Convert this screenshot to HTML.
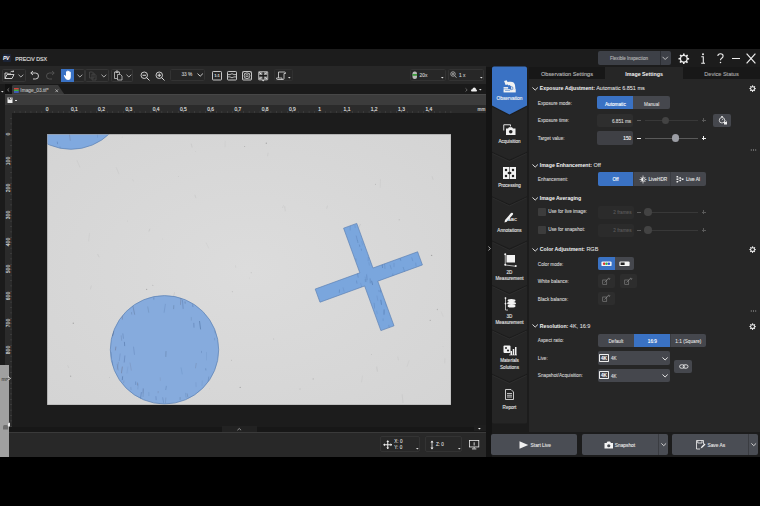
<!DOCTYPE html>
<html><head><meta charset="utf-8">
<style>
*{margin:0;padding:0;box-sizing:border-box}
html,body{width:760px;height:506px;overflow:hidden;background:#000;font-family:"Liberation Sans",sans-serif;color:#ddd}
.a{position:absolute}
.t{position:absolute;white-space:nowrap;font-size:5px;line-height:8px;height:8px;color:#d0d0d0;-webkit-text-stroke:0.12px currentColor}
.b,b{font-weight:bold;-webkit-text-stroke:0}
.c{text-align:center}
.r{text-align:right}
svg{position:absolute;overflow:visible}
.btn{position:absolute;background:#45474d}
.blue{background:#3a72c4}
</style></head><body>

<!-- ===== TITLE BAR ===== -->
<div class="a" style="left:0;top:49px;width:760px;height:17.5px;background:#1c1c1c"></div>
<div class="a" style="left:2.5px;top:53.5px;width:8.5px;height:8px;background:#1c2538;border-radius:1px"></div>
<div class="t b" style="left:3.1px;top:53.6px;font-size:5px;line-height:8px;color:#fff;letter-spacing:-0.4px;font-style:italic">PV</div>
<div class="t" style="left:15.3px;top:54.6px;font-size:5.3px;color:#e2e2e2">PRECiV DSX</div>

<div class="a" style="left:598.3px;top:50.6px;width:72.7px;height:14px;background:#3d4047;border-radius:2px"></div>
<div class="a" style="left:660px;top:50.6px;width:0.8px;height:14px;background:#2c2e33"></div>
<div class="t c" style="left:598px;width:62px;top:55px;font-size:4.6px;color:#b5b5b5">Flexible Inspection</div>
<svg style="left:662px;top:56px" width="8" height="5"><path d="M0.5 0.8 L3.2 3.5 L5.9 0.8" stroke="#ccc" stroke-width="0.9" fill="none"/></svg>
<!-- gear -->
<svg style="left:678.2px;top:52.8px" width="11.6" height="11.6" viewBox="0 0 24 24"><path fill="#eee" d="M10.5 1h3l.5 3.1a8 8 0 0 1 2.3 1l2.6-1.8 2.1 2.1-1.8 2.6a8 8 0 0 1 1 2.3L23 10.5v3l-3.1.5a8 8 0 0 1-1 2.3l1.8 2.6-2.1 2.1-2.6-1.8a8 8 0 0 1-2.3 1L13.5 23h-3l-.5-3.1a8 8 0 0 1-2.3-1l-2.6 1.8-2.1-2.1 1.8-2.6a8 8 0 0 1-1-2.3L1 13.5v-3l3.1-.5a8 8 0 0 1 1-2.3L3.3 5.1l2.1-2.1 2.6 1.8a8 8 0 0 1 2.3-1z"/><circle cx="12" cy="12" r="5.6" fill="#1c1c1c"/></svg>
<svg style="left:699.5px;top:53px" width="6" height="11"><circle cx="3" cy="1.2" r="1" fill="#eee"/><path d="M1.3 3.8 H3.3 V10 M1.2 10.2 H5" stroke="#eee" stroke-width="1.1" fill="none"/></svg>
<svg style="left:716.8px;top:53.3px" width="7" height="11"><path d="M0.9 3 Q0.9 0.7 3.5 0.7 Q6.1 0.7 6.1 3 Q6.1 4.6 4.4 5.4 Q3.5 5.9 3.5 7.3" stroke="#eee" stroke-width="1.1" fill="none"/><circle cx="3.5" cy="9.6" r="0.75" fill="#eee"/></svg>
<div class="a" style="left:731.8px;top:57.8px;width:8.2px;height:1.3px;background:#eee"></div>
<svg style="left:746px;top:53px" width="10" height="11"><path d="M0.6 0.6 L9.4 10.4 M9.4 0.6 L0.6 10.4" stroke="#eee" stroke-width="1.2"/></svg>

<!-- ===== LEFT WORK AREA ===== -->
<!-- toolbar -->
<div class="a" style="left:0;top:66.2px;width:486px;height:18.1px;background:#272727"></div>
<!-- tab strip -->
<div class="a" style="left:0;top:84.3px;width:486px;height:10.1px;background:#1a1a1a"></div>
<div class="a" style="left:4.7px;top:84.3px;width:7px;height:10.1px;background:#111"></div>
<!-- document tab -->
<svg style="left:11.8px;top:85.3px" width="53" height="10"><path d="M0 9.2 L0 1.5 Q0 0 1.5 0 L46 0 L52.3 9.2 Z" fill="#3a3a3a"/></svg>
<!-- sub toolbar -->
<div class="a" style="left:4.7px;top:94.4px;width:481.3px;height:11px;background:#3c3c3c;border-top:0.8px solid #474747"></div>
<!-- h ruler -->
<div class="a" style="left:4.7px;top:105.4px;width:481.3px;height:8px;background:#2b2b2b"></div>
<!-- left strip -->
<div class="a" style="left:0;top:84.3px;width:4.7px;height:343px;background:#1b1b1b"></div>
<!-- v ruler -->
<div class="a" style="left:4.7px;top:113.4px;width:7.7px;height:313.6px;background:#2b2b2b"></div>
<!-- canvas -->
<div class="a" style="left:12.4px;top:113.4px;width:473.6px;height:313.6px;background:#1c1c1c"></div>

<!-- toolbar groups -->
<div class="a" style="left:2.4px;top:68.7px;width:23.2px;height:13.1px;border:0.7px solid #363636;border-radius:1.5px"></div>
<svg style="left:3.5px;top:70px" width="11" height="10" viewBox="0 0 22 20"><path d="M2 6 V17 H16 L20 9 H6 L2 17 M2 6 H7 L9 8 H14 V9" stroke="#ddd" stroke-width="1.8" fill="none" stroke-linejoin="round"/><path d="M13 4 Q16 1 19 3 M19 1 V3.5 H16.5" stroke="#ddd" stroke-width="1.6" fill="none"/></svg>
<svg style="left:18px;top:73.5px" width="6" height="4"><path d="M0.5 0.7 L2.9 3 L5.3 0.7" stroke="#ccc" stroke-width="0.8" fill="none"/></svg>
<!-- undo redo -->
<svg style="left:29.3px;top:70px" width="11" height="10" viewBox="0 0 22 20"><path d="M4 6 H13 Q19 6 19 12 Q19 18 13 18 H8" stroke="#ddd" stroke-width="1.8" fill="none"/><path d="M8 2 L3.5 6 L8 10" stroke="#ddd" stroke-width="1.8" fill="none"/></svg>
<svg style="left:44.5px;top:70px" width="11" height="10" viewBox="0 0 22 20"><path d="M18 6 H9 Q3 6 3 12 Q3 18 9 18 H14" stroke="#555" stroke-width="1.8" fill="none"/><path d="M14 2 L18.5 6 L14 10" stroke="#555" stroke-width="1.8" fill="none"/></svg>
<!-- hand -->
<div class="a" style="left:60.5px;top:68.7px;width:24px;height:13.1px;border:0.7px solid #363636;border-radius:1.5px"></div>
<div class="a blue" style="left:61px;top:68.7px;width:13.4px;height:13.1px"></div>
<svg style="left:63px;top:69.8px" width="10" height="11" viewBox="0 0 20 22"><path d="M6 12 V4 Q6 2.5 7.2 2.5 Q8.4 2.5 8.4 4 V10 V2.5 Q8.4 1 9.6 1 Q10.8 1 10.8 2.5 V10 V3 Q10.8 1.5 12 1.5 Q13.2 1.5 13.2 3 V10 V5 Q13.2 3.5 14.4 3.5 Q15.6 3.5 15.6 5 V13 Q15.6 20 10 20 Q6.5 20 4.5 16.5 L2 12 Q1.2 10.5 2.4 10 Q3.6 9.5 4.6 11 Z" fill="#fff"/></svg>
<svg style="left:77px;top:73.5px" width="6" height="4"><path d="M0.5 0.7 L2.9 3 L5.3 0.7" stroke="#ccc" stroke-width="0.8" fill="none"/></svg>
<!-- copy -->
<div class="a" style="left:85.2px;top:68.7px;width:23.7px;height:13.1px;border:0.7px solid #363636;border-radius:1.5px"></div>
<svg style="left:87.5px;top:70.5px" width="10" height="10" viewBox="0 0 20 20"><path d="M3 2 H9 L12 5 V14 H3 Z M8 6 H13 L16 9 V18 H8 Z" stroke="#4a4a4a" stroke-width="1.6" fill="none"/></svg>
<svg style="left:101px;top:73.5px" width="6" height="4"><path d="M0.5 0.7 L2.9 3 L5.3 0.7" stroke="#ccc" stroke-width="0.8" fill="none"/></svg>
<!-- paste -->
<div class="a" style="left:111.3px;top:68.7px;width:21.9px;height:13.1px;border:0.7px solid #363636;border-radius:1.5px"></div>
<svg style="left:112.5px;top:70.3px" width="10" height="10.5" viewBox="0 0 20 21"><path d="M3 4 H13 V8 M3 4 V17 H8 M6 2 H10 V5 H6 Z" stroke="#c8c8c8" stroke-width="1.6" fill="none"/><path d="M9 9 H15 L18 12 V20 H9 Z" stroke="#c8c8c8" stroke-width="1.6" fill="none"/></svg>
<svg style="left:126px;top:73.5px" width="6" height="4"><path d="M0.5 0.7 L2.9 3 L5.3 0.7" stroke="#ccc" stroke-width="0.8" fill="none"/></svg>
<!-- zoom out/in -->
<svg style="left:139.7px;top:70.9px" width="10.5" height="10" viewBox="0 0 21 20"><circle cx="8.5" cy="8.5" r="6.5" stroke="#ddd" stroke-width="1.8" fill="none"/><path d="M5 8.5 H12 M13 13 L19 19" stroke="#ddd" stroke-width="2" fill="none"/></svg>
<svg style="left:155px;top:70.9px" width="10.5" height="10" viewBox="0 0 21 20"><circle cx="8.5" cy="8.5" r="6.5" stroke="#ddd" stroke-width="1.8" fill="none"/><path d="M5 8.5 H12 M8.5 5 V12 M13 13 L19 19" stroke="#ddd" stroke-width="2" fill="none"/></svg>
<!-- 33% -->
<div class="a" style="left:170.1px;top:69.3px;width:35px;height:11.3px;border:0.7px solid #333;border-radius:1.5px;background:#252525"></div>
<div class="t" style="left:181.4px;top:71px;font-size:4.8px;color:#c8c8c8">33 %</div>
<svg style="left:197px;top:73.3px" width="7" height="4"><path d="M0.5 0.6 L3.2 3.2 L5.9 0.6" stroke="#ddd" stroke-width="0.9" fill="none"/></svg>
<!-- view icons -->
<svg style="left:212px;top:70.5px" width="10" height="9.5"><rect x="0.5" y="0.5" width="9" height="8.5" rx="0.8" stroke="#d8d8d8" stroke-width="0.9" fill="none"/></svg>
<div class="t c b" style="left:212px;width:10px;top:72.2px;font-size:4.2px;color:#e0e0e0;letter-spacing:-0.2px">1:1</div>
<svg style="left:227px;top:70.5px" width="10" height="9.5"><rect x="0.5" y="0.5" width="9" height="8.5" rx="0.8" stroke="#d8d8d8" stroke-width="0.9" fill="none"/><path d="M1 3.6 H3 Q5 1.8 7 3.6 H9 M1 5.9 H3 Q5 7.7 7 5.9 H9" stroke="#d8d8d8" stroke-width="0.8" fill="none"/></svg>
<svg style="left:242.4px;top:70.5px" width="10" height="9.5"><rect x="0.5" y="0.5" width="9" height="8.5" rx="0.8" stroke="#d8d8d8" stroke-width="0.9" fill="none"/><circle cx="5" cy="4.75" r="2.9" stroke="#d8d8d8" stroke-width="0.8" fill="none"/><rect x="4" y="3.75" width="2" height="2" stroke="#d8d8d8" stroke-width="0.6" fill="none"/><path d="M1 1 L2.9 2.9 M9 1 L7.1 2.9 M1 8.5 L2.9 6.6 M9 8.5 L7.1 6.6" stroke="#bbb" stroke-width="0.6"/></svg>
<svg style="left:257.7px;top:70.5px" width="10.3" height="10.5"><rect x="0.5" y="0.5" width="9.3" height="8.5" rx="0.8" stroke="#aaa" stroke-width="0.8" fill="#8a8a8a"/><path d="M5.15 1.2 V8.3 M1.2 4.75 H9.1" stroke="#1a1a1a" stroke-width="1.3"/><path d="M1.3 1.3 L3.3 3.3 M9 1.3 L7 3.3 M1.3 8.2 L3.3 6.2 M9 8.2 L7 6.2" stroke="#eee" stroke-width="0.9"/><path d="M3.9 9.1 H6.4 L5.15 10.4 Z" fill="#ddd"/></svg>
<div class="a" style="left:274.3px;top:69px;width:18.4px;height:12px;border:0.7px solid #303030;border-radius:1.5px"></div>
<svg style="left:276px;top:70.5px" width="10" height="9.5" viewBox="0 0 20 19"><path d="M5 2 H17 Q19 2 19 4 V5 H16 V15 Q16 17 14 17 H3 Q1 17 1 15 V14 H5 Z M5 14 H12 V17" stroke="#ddd" stroke-width="1.6" fill="none"/></svg>
<svg style="left:288px;top:76.8px" width="3" height="2"><path d="M0 0 H2.6 L1.3 1.5 Z" fill="#ddd"/></svg>
<!-- objective / zoom -->
<div class="a" style="left:410px;top:69.3px;width:35.6px;height:11.9px;border:0.7px solid #333;border-radius:1.5px"></div>
<svg style="left:411.8px;top:71.1px" width="5.5" height="8.5"><rect x="0.5" y="0.5" width="4.5" height="7.5" rx="2" fill="#bbb"/><rect x="0.5" y="3" width="4.5" height="1.8" fill="#3a9a3a"/></svg>
<div class="t" style="left:419.6px;top:71.5px;font-size:4.8px;color:#ccc">20x</div>
<svg style="left:441px;top:77.3px" width="3" height="2"><path d="M0 0 H2.6 L1.3 1.5 Z" fill="#ddd"/></svg>
<div class="a" style="left:448.3px;top:69.3px;width:35.8px;height:11.9px;border:0.7px solid #333;border-radius:1.5px"></div>
<svg style="left:450px;top:71px" width="7" height="7.5" viewBox="0 0 14 15"><circle cx="6" cy="6" r="4.5" stroke="#ccc" stroke-width="1.4" fill="none"/><path d="M4 6 H8 M6 4 V8 M9.5 9.5 L13 13.5" stroke="#ccc" stroke-width="1.4"/></svg>
<div class="t" style="left:459px;top:71.5px;font-size:4.8px;color:#ccc">1 x</div>
<svg style="left:479.5px;top:77.3px" width="3" height="2"><path d="M0 0 H2.6 L1.3 1.5 Z" fill="#ddd"/></svg>
<!-- tab strip items -->
<svg style="left:1px;top:90.8px" width="3" height="2"><path d="M0 0 H2.6 L1.3 1.5 Z" fill="#ddd"/></svg>
<svg style="left:7.3px;top:88px" width="3" height="4"><path d="M2.2 0.3 L0.5 1.9 L2.2 3.5" stroke="#bbb" stroke-width="0.6" fill="none"/></svg>
<svg style="left:14px;top:87.8px" width="5" height="4.8"><rect x="0" y="0" width="4.7" height="1.6" fill="#d94040"/><rect x="0" y="1.6" width="4.7" height="1.6" fill="#40b040"/><rect x="0" y="3.2" width="4.7" height="1.6" fill="#4060d0"/></svg>
<div class="t" style="left:20.3px;top:86.8px;font-size:4.8px;color:#bcbcbc">Image_03.tif*</div>
<svg style="left:54.8px;top:89px" width="3.5" height="3.5"><path d="M0.4 0.4 L3.1 3.1 M3.1 0.4 L0.4 3.1" stroke="#ccc" stroke-width="0.7"/></svg>
<svg style="left:465px;top:88px" width="3" height="4"><path d="M0.5 0.3 L2.2 1.9 L0.5 3.5" stroke="#999" stroke-width="0.6" fill="none"/></svg>
<svg style="left:470.8px;top:87.2px" width="6" height="5"><path d="M1 4.5 H5.2 Q6 4.5 6 3.6 Q6 2.6 5 2.6 Q5 0.6 3.2 0.6 Q1.6 0.6 1.4 2.2 Q0 2.3 0 3.5 Q0 4.5 1 4.5Z" fill="#eee"/></svg>
<svg style="left:479.4px;top:89px" width="3" height="2"><path d="M0 0 H2.6 L1.3 1.5 Z" fill="#ddd"/></svg>
<!-- sub toolbar save icon -->
<svg style="left:7px;top:96.5px" width="6" height="6.5" viewBox="0 0 12 13"><path d="M1 1 H11 V12 H1 Z" fill="#eee"/><rect x="3" y="1" width="6" height="4" fill="#3a3a3a"/><rect x="6" y="1.5" width="1.8" height="2.5" fill="#eee"/></svg>
<div class="a" style="left:15px;top:100px;width:1.6px;height:0.6px;background:#ddd"></div>

<!-- rulers -->
<div class="t c" style="left:37.0px;width:20px;top:105.8px;font-size:4.9px;color:#e0e0e0">0</div>
<div class="t c" style="left:64.3px;width:20px;top:105.8px;font-size:4.9px;color:#e0e0e0">0,1</div>
<div class="t c" style="left:91.5px;width:20px;top:105.8px;font-size:4.9px;color:#e0e0e0">0,2</div>
<div class="t c" style="left:118.8px;width:20px;top:105.8px;font-size:4.9px;color:#e0e0e0">0,3</div>
<div class="t c" style="left:146.1px;width:20px;top:105.8px;font-size:4.9px;color:#e0e0e0">0,4</div>
<div class="t c" style="left:173.3px;width:20px;top:105.8px;font-size:4.9px;color:#e0e0e0">0,5</div>
<div class="t c" style="left:200.6px;width:20px;top:105.8px;font-size:4.9px;color:#e0e0e0">0,6</div>
<div class="t c" style="left:227.9px;width:20px;top:105.8px;font-size:4.9px;color:#e0e0e0">0,7</div>
<div class="t c" style="left:255.2px;width:20px;top:105.8px;font-size:4.9px;color:#e0e0e0">0,8</div>
<div class="t c" style="left:282.4px;width:20px;top:105.8px;font-size:4.9px;color:#e0e0e0">0,9</div>
<div class="t c" style="left:309.7px;width:20px;top:105.8px;font-size:4.9px;color:#e0e0e0">1</div>
<div class="t c" style="left:337.0px;width:20px;top:105.8px;font-size:4.9px;color:#e0e0e0">1,1</div>
<div class="t c" style="left:364.2px;width:20px;top:105.8px;font-size:4.9px;color:#e0e0e0">1,2</div>
<div class="t c" style="left:391.5px;width:20px;top:105.8px;font-size:4.9px;color:#e0e0e0">1,3</div>
<div class="t c" style="left:418.8px;width:20px;top:105.8px;font-size:4.9px;color:#e0e0e0">1,4</div>
<div class="t" style="left:477.5px;top:105.8px;font-size:4.7px;color:#dcdcdc">mm</div>
<svg style="left:0;top:111.9px" width="486" height="2"><path d="M14.28 0h0.6 M19.73 0h0.6 M25.18 0h0.6 M30.64 0h0.6 M36.09 0h0.6 M41.55 0h0.6 M47.00 0h0.6 M52.45 0h0.6 M57.91 0h0.6 M63.36 0h0.6 M68.82 0h0.6 M74.27 0h0.6 M79.72 0h0.6 M85.18 0h0.6 M90.63 0h0.6 M96.09 0h0.6 M101.54 0h0.6 M106.99 0h0.6 M112.45 0h0.6 M117.90 0h0.6 M123.36 0h0.6 M128.81 0h0.6 M134.26 0h0.6 M139.72 0h0.6 M145.17 0h0.6 M150.63 0h0.6 M156.08 0h0.6 M161.53 0h0.6 M166.99 0h0.6 M172.44 0h0.6 M177.90 0h0.6 M183.35 0h0.6 M188.80 0h0.6 M194.26 0h0.6 M199.71 0h0.6 M205.17 0h0.6 M210.62 0h0.6 M216.07 0h0.6 M221.53 0h0.6 M226.98 0h0.6 M232.44 0h0.6 M237.89 0h0.6 M243.34 0h0.6 M248.80 0h0.6 M254.25 0h0.6 M259.71 0h0.6 M265.16 0h0.6 M270.61 0h0.6 M276.07 0h0.6 M281.52 0h0.6 M286.98 0h0.6 M292.43 0h0.6 M297.88 0h0.6 M303.34 0h0.6 M308.79 0h0.6 M314.25 0h0.6 M319.70 0h0.6 M325.15 0h0.6 M330.61 0h0.6 M336.06 0h0.6 M341.52 0h0.6 M346.97 0h0.6 M352.42 0h0.6 M357.88 0h0.6 M363.33 0h0.6 M368.79 0h0.6 M374.24 0h0.6 M379.69 0h0.6 M385.15 0h0.6 M390.60 0h0.6 M396.06 0h0.6 M401.51 0h0.6 M406.96 0h0.6 M412.42 0h0.6 M417.87 0h0.6 M423.33 0h0.6 M428.78 0h0.6 M434.23 0h0.6 M439.69 0h0.6 M445.14 0h0.6 M450.60 0h0.6" stroke="#777" stroke-width="0.7"/></svg>
<div class="t c" style="left:-1.7px;width:20px;top:130.4px;font-size:5px;color:#d8d8d8;transform:rotate(-90deg)">0</div>
<div class="t c" style="left:-1.7px;width:20px;top:157.4px;font-size:5px;color:#d8d8d8;transform:rotate(-90deg)">100</div>
<div class="t c" style="left:-1.7px;width:20px;top:184.4px;font-size:5px;color:#d8d8d8;transform:rotate(-90deg)">200</div>
<div class="t c" style="left:-1.7px;width:20px;top:211.4px;font-size:5px;color:#d8d8d8;transform:rotate(-90deg)">300</div>
<div class="t c" style="left:-1.7px;width:20px;top:238.4px;font-size:5px;color:#d8d8d8;transform:rotate(-90deg)">400</div>
<div class="t c" style="left:-1.7px;width:20px;top:265.4px;font-size:5px;color:#d8d8d8;transform:rotate(-90deg)">500</div>
<div class="t c" style="left:-1.7px;width:20px;top:292.4px;font-size:5px;color:#d8d8d8;transform:rotate(-90deg)">600</div>
<div class="t c" style="left:-1.7px;width:20px;top:319.4px;font-size:5px;color:#d8d8d8;transform:rotate(-90deg)">700</div>
<div class="t c" style="left:-1.7px;width:20px;top:346.4px;font-size:5px;color:#d8d8d8;transform:rotate(-90deg)">800</div>
<svg style="left:11.2px;top:0" width="2" height="430"><path d="M0 118.20v0.6 M0 123.60v0.6 M0 129.00v0.6 M0 134.40v0.6 M0 139.80v0.6 M0 145.20v0.6 M0 150.60v0.6 M0 156.00v0.6 M0 161.40v0.6 M0 166.80v0.6 M0 172.20v0.6 M0 177.60v0.6 M0 183.00v0.6 M0 188.40v0.6 M0 193.80v0.6 M0 199.20v0.6 M0 204.60v0.6 M0 210.00v0.6 M0 215.40v0.6 M0 220.80v0.6 M0 226.20v0.6 M0 231.60v0.6 M0 237.00v0.6 M0 242.40v0.6 M0 247.80v0.6 M0 253.20v0.6 M0 258.60v0.6 M0 264.00v0.6 M0 269.40v0.6 M0 274.80v0.6 M0 280.20v0.6 M0 285.60v0.6 M0 291.00v0.6 M0 296.40v0.6 M0 301.80v0.6 M0 307.20v0.6 M0 312.60v0.6 M0 318.00v0.6 M0 323.40v0.6 M0 328.80v0.6 M0 334.20v0.6 M0 339.60v0.6 M0 345.00v0.6 M0 350.40v0.6 M0 355.80v0.6 M0 361.20v0.6 M0 366.60v0.6 M0 372.00v0.6 M0 377.40v0.6 M0 382.80v0.6 M0 388.20v0.6 M0 393.60v0.6 M0 399.00v0.6 M0 404.40v0.6 M0 409.80v0.6 M0 415.20v0.6 M0 420.60v0.6 M0 426.00v0.6" stroke="#777" stroke-width="0.7"/></svg>
<!-- image -->
<div class="a" style="left:47px;top:134.2px;width:404.3px;height:271.2px;background:#d9d9d9;overflow:hidden">
  <svg style="left:0;top:0" width="404.3" height="271.2">
    <defs>
      <radialGradient id="vg" cx="50%" cy="50%" r="70%"><stop offset="0" stop-color="#dcdcdc"/><stop offset="1" stop-color="#d4d4d4"/></radialGradient>
      <clipPath id="c1"><circle cx="24" cy="-40.1" r="55.4"/></clipPath>
      <clipPath id="c2"><circle cx="117.5" cy="215.8" r="54.2"/></clipPath>
      <clipPath id="c3"><path transform="translate(321.8 143.0) rotate(-20)" d="M-7 -54.5 H7 V-7 H54.5 V7 H7 V54.5 H-7 V7 H-54.5 V-7 H-7 Z"/></clipPath>
    </defs>
    <rect x="0" y="0" width="404.3" height="271.2" fill="url(#vg)"/>
    <circle cx="131.5" cy="42.3" r="0.33" fill="#555" opacity="0.28"/><circle cx="148.3" cy="17.5" r="0.31" fill="#555" opacity="0.26"/><path d="M29.9 26.2 l3.0 7.2" stroke="#777" stroke-width="0.5" opacity="0.15"/><circle cx="253.0" cy="255.0" r="0.46" fill="#555" opacity="0.38"/><path d="M20.6 231.2 l1.2 2.8" stroke="#777" stroke-width="0.5" opacity="0.16"/><circle cx="328.5" cy="50.3" r="0.56" fill="#555" opacity="0.25"/><path d="M221.1 18.8 l-0.6 3.4" stroke="#777" stroke-width="0.5" opacity="0.18"/><path d="M127.7 158.3 l-1.2 3.9" stroke="#777" stroke-width="0.5" opacity="0.23"/><circle cx="99.6" cy="155.4" r="0.65" fill="#555" opacity="0.32"/><path d="M117.2 263.7 l-1.3 4.7" stroke="#777" stroke-width="0.5" opacity="0.14"/><circle cx="197.6" cy="12.5" r="0.61" fill="#555" opacity="0.29"/><circle cx="352.2" cy="85.8" r="0.54" fill="#555" opacity="0.29"/><circle cx="184.5" cy="226.3" r="0.49" fill="#555" opacity="0.31"/><circle cx="26.3" cy="189.3" r="0.70" fill="#555" opacity="0.35"/><circle cx="115.8" cy="105.0" r="0.31" fill="#555" opacity="0.26"/><path d="M69.2 33.3 l2.8 6.8" stroke="#777" stroke-width="0.5" opacity="0.15"/><path d="M158.4 234.7 l-0.3 5.1" stroke="#777" stroke-width="0.5" opacity="0.26"/><path d="M329.7 232.7 l0.7 4.9" stroke="#777" stroke-width="0.5" opacity="0.26"/><path d="M385.1 42.3 l1.0 3.5" stroke="#777" stroke-width="0.5" opacity="0.19"/><path d="M237.6 72.2 l0.7 4.9" stroke="#777" stroke-width="0.5" opacity="0.20"/><circle cx="383.2" cy="186.4" r="0.55" fill="#555" opacity="0.31"/><circle cx="23.6" cy="242.2" r="0.65" fill="#555" opacity="0.34"/><path d="M159.0 108.5 l2.8 5.8" stroke="#777" stroke-width="0.5" opacity="0.12"/><path d="M85.5 45.3 l1.2 2.1" stroke="#777" stroke-width="0.5" opacity="0.14"/><path d="M42.6 99.1 l-1.0 8.1" stroke="#777" stroke-width="0.5" opacity="0.13"/><path d="M102.9 94.8 l-1.0 2.7" stroke="#777" stroke-width="0.5" opacity="0.28"/><path d="M188.4 131.2 l0.4 2.7" stroke="#777" stroke-width="0.5" opacity="0.15"/><path d="M333.5 45.1 l-0.3 8.7" stroke="#777" stroke-width="0.5" opacity="0.13"/><circle cx="219.3" cy="9.2" r="0.69" fill="#555" opacity="0.36"/><path d="M280.5 71.7 l-0.9 3.0" stroke="#777" stroke-width="0.5" opacity="0.20"/><path d="M313.6 90.0 l-3.7 6.7" stroke="#777" stroke-width="0.5" opacity="0.25"/><circle cx="324.4" cy="220.5" r="0.39" fill="#555" opacity="0.28"/><path d="M144.2 9.7 l1.0 3.8" stroke="#777" stroke-width="0.5" opacity="0.23"/><circle cx="384.6" cy="121.4" r="0.70" fill="#555" opacity="0.37"/><path d="M147.9 60.9 l1.0 3.2" stroke="#777" stroke-width="0.5" opacity="0.21"/><path d="M362.1 226.4 l-2.0 6.3" stroke="#777" stroke-width="0.5" opacity="0.13"/><circle cx="266.2" cy="244.9" r="0.60" fill="#555" opacity="0.27"/><path d="M73.4 212.7 l-3.6 6.7" stroke="#777" stroke-width="0.5" opacity="0.18"/><circle cx="162.6" cy="254.8" r="0.37" fill="#555" opacity="0.19"/><circle cx="62.5" cy="243.6" r="0.36" fill="#555" opacity="0.35"/><path d="M394.1 177.5 l2.2 5.4" stroke="#777" stroke-width="0.5" opacity="0.11"/><circle cx="390.4" cy="175.5" r="0.67" fill="#555" opacity="0.26"/><path d="M350.7 222.6 l0.8 3.7" stroke="#777" stroke-width="0.5" opacity="0.15"/><path d="M236.6 71.3 l-1.2 2.7" stroke="#777" stroke-width="0.5" opacity="0.17"/><circle cx="185.3" cy="157.8" r="0.47" fill="#555" opacity="0.37"/><circle cx="202.7" cy="144.0" r="0.31" fill="#555" opacity="0.26"/><circle cx="75.2" cy="3.0" r="0.37" fill="#555" opacity="0.27"/><path d="M292.1 150.6 l-0.3 5.6" stroke="#777" stroke-width="0.5" opacity="0.24"/><path d="M44.4 151.6 l-1.1 3.8" stroke="#777" stroke-width="0.5" opacity="0.19"/><circle cx="226.7" cy="204.9" r="0.48" fill="#555" opacity="0.30"/><circle cx="204.2" cy="138.7" r="0.48" fill="#555" opacity="0.28"/><circle cx="193.2" cy="253.4" r="0.65" fill="#555" opacity="0.37"/><circle cx="105.8" cy="151.4" r="0.64" fill="#555" opacity="0.19"/><path d="M50.6 120.0 l1.6 3.3" stroke="#777" stroke-width="0.5" opacity="0.22"/><path d="M315.6 241.5 l-1.2 6.9" stroke="#777" stroke-width="0.5" opacity="0.13"/><path d="M355.1 260.3 l0.9 8.6" stroke="#777" stroke-width="0.5" opacity="0.19"/><path d="M397.9 224.3 l-0.1 5.0" stroke="#777" stroke-width="0.5" opacity="0.17"/><circle cx="80.3" cy="87.0" r="0.31" fill="#555" opacity="0.29"/><path d="M178.2 6.8 l-0.1 6.4" stroke="#777" stroke-width="0.5" opacity="0.12"/><circle cx="396.0" cy="212.5" r="0.34" fill="#555" opacity="0.23"/>
    <circle cx="24" cy="-40.1" r="55.4" fill="#80a9df" stroke="#5a7fb2" stroke-width="0.7"/>
    <circle cx="117.5" cy="215.8" r="54.2" fill="#86abdd" stroke="#5a7fb2" stroke-width="0.7"/>
    <path transform="translate(321.8 143.0) rotate(-20)" d="M-7 -54.5 H7 V-7 H54.5 V7 H7 V54.5 H-7 V7 H-54.5 V-7 H-7 Z" fill="#7aa6dd" stroke="#5a7fb2" stroke-width="0.6"/>
    <g clip-path="url(#c1)"><path d="M-27.8 -26.7 l0.1 5.3" stroke="#5a4a50" stroke-width="0.75" opacity="0.20"/><path d="M12.4 -54.5 l0.7 4.1" stroke="#2f4f80" stroke-width="0.89" opacity="0.32"/><path d="M-14.2 -69.8 l-0.3 7.2" stroke="#2f4f80" stroke-width="0.77" opacity="0.36"/><path d="M63.4 -25.7 l0.1 2.2" stroke="#2f4f80" stroke-width="0.66" opacity="0.36"/><path d="M-7.8 -81.3 l0.5 5.2" stroke="#2f4f80" stroke-width="1.00" opacity="0.40"/><path d="M13.0 -82.7 l0.7 4.0" stroke="#3a4a60" stroke-width="0.86" opacity="0.25"/><path d="M-14.6 -7.7 l0.3 2.0" stroke="#5a4a50" stroke-width="0.95" opacity="0.27"/><path d="M-12.3 -23.5 l0.5 6.7" stroke="#5a4a50" stroke-width="0.59" opacity="0.15"/><path d="M26.1 -83.8 l0.5 2.7" stroke="#2f4f80" stroke-width="0.88" opacity="0.19"/><path d="M-24.4 -25.0 l-0.1 2.9" stroke="#2f4f80" stroke-width="0.47" opacity="0.26"/><path d="M78.7 -43.0 l-1.1 6.1" stroke="#2f4f80" stroke-width="0.41" opacity="0.20"/><path d="M68.5 -29.1 l-0.1 2.1" stroke="#2f4f80" stroke-width="0.90" opacity="0.25"/><path d="M59.7 -20.5 l0.4 6.2" stroke="#5a4a50" stroke-width="0.67" opacity="0.39"/><path d="M46.3 -82.5 l0.6 6.4" stroke="#2f4f80" stroke-width="0.54" opacity="0.30"/><path d="M50.2 -3.1 l0.4 6.8" stroke="#2f4f80" stroke-width="0.69" opacity="0.17"/><path d="M67.6 -8.6 l-0.2 3.7" stroke="#5a4a50" stroke-width="0.55" opacity="0.36"/><path d="M10.3 7.7 l0.3 2.5" stroke="#2f4f80" stroke-width="0.74" opacity="0.36"/><path d="M19.3 -16.6 l0.2 2.1" stroke="#2f4f80" stroke-width="0.67" opacity="0.17"/><path d="M13.0 12.5 l0.4 2.6" stroke="#2f4f80" stroke-width="0.67" opacity="0.23"/><path d="M-8.2 -62.8 l0.4 4.5" stroke="#2f4f80" stroke-width="0.42" opacity="0.30"/><path d="M-19.5 -39.7 l1.6 8.8" stroke="#2f4f80" stroke-width="0.73" opacity="0.33"/><path d="M32.8 -75.2 l-0.9 6.7" stroke="#2f4f80" stroke-width="0.92" opacity="0.25"/><path d="M56.3 -79.8 l-0.1 4.7" stroke="#2f4f80" stroke-width="0.77" opacity="0.17"/><path d="M71.2 -44.4 l-0.3 4.7" stroke="#2f4f80" stroke-width="0.75" opacity="0.26"/><path d="M-19.3 -46.5 l0.5 2.6" stroke="#5a4a50" stroke-width="0.97" opacity="0.18"/><path d="M22.4 -0.0 l0.9 6.7" stroke="#5a4a50" stroke-width="0.50" opacity="0.38"/><path d="M-21.4 -41.5 l-0.1 3.8" stroke="#2f4f80" stroke-width="0.88" opacity="0.34"/><path d="M59.5 -75.4 l0.7 4.2" stroke="#2f4f80" stroke-width="0.70" opacity="0.36"/><path d="M17.0 -70.0 l0.1 3.2" stroke="#5a4a50" stroke-width="0.57" opacity="0.20"/><path d="M-13.1 -9.9 l-0.8 7.0" stroke="#2f4f80" stroke-width="0.77" opacity="0.23"/></g>
    <g clip-path="url(#c2)"><path d="M108.9 262.2 l0.3 4.0" stroke="#2f4f80" stroke-width="0.79" opacity="0.29"/><path d="M75.6 242.3 l-0.3 3.8" stroke="#2f4f80" stroke-width="0.88" opacity="0.40"/><path d="M71.4 228.1 l-1.2 7.6" stroke="#5a4a50" stroke-width="0.81" opacity="0.20"/><path d="M115.6 263.3 l1.1 5.6" stroke="#2f4f80" stroke-width="0.54" opacity="0.34"/><path d="M77.0 246.5 l-0.4 2.6" stroke="#5a4a50" stroke-width="0.83" opacity="0.18"/><path d="M119.0 217.1 l-0.2 5.8" stroke="#3a4a60" stroke-width="0.70" opacity="0.35"/><path d="M77.9 221.5 l-0.7 7.0" stroke="#2f4f80" stroke-width="0.78" opacity="0.33"/><path d="M119.4 251.9 l-0.7 4.1" stroke="#2f4f80" stroke-width="0.96" opacity="0.22"/><path d="M91.3 249.6 l-0.5 5.8" stroke="#2f4f80" stroke-width="0.69" opacity="0.16"/><path d="M75.4 232.6 l-1.0 6.7" stroke="#5a4a50" stroke-width="0.68" opacity="0.40"/><path d="M167.9 196.6 l0.3 2.6" stroke="#2f4f80" stroke-width="0.72" opacity="0.22"/><path d="M77.4 207.9 l0.3 4.2" stroke="#2f4f80" stroke-width="0.91" opacity="0.38"/><path d="M101.8 258.1 l0.1 3.9" stroke="#2f4f80" stroke-width="0.65" opacity="0.18"/><path d="M75.1 180.0 l0.3 5.6" stroke="#5a4a50" stroke-width="0.88" opacity="0.29"/><path d="M161.8 242.6 l-0.7 5.2" stroke="#2f4f80" stroke-width="0.88" opacity="0.25"/><path d="M73.2 219.5 l-1.0 7.6" stroke="#2f4f80" stroke-width="0.69" opacity="0.23"/><path d="M81.0 232.6 l-1.1 6.8" stroke="#2f4f80" stroke-width="0.42" opacity="0.19"/><path d="M100.7 172.5 l1.1 6.2" stroke="#3a4a60" stroke-width="0.84" opacity="0.18"/><path d="M106.9 163.4 l-0.1 2.2" stroke="#2f4f80" stroke-width="0.90" opacity="0.30"/><path d="M144.3 183.1 l0.0 3.5" stroke="#3a4a60" stroke-width="0.75" opacity="0.18"/><path d="M152.5 187.0 l1.1 8.4" stroke="#2f4f80" stroke-width="1.00" opacity="0.37"/><path d="M146.8 188.9 l0.2 4.7" stroke="#2f4f80" stroke-width="0.96" opacity="0.29"/><path d="M133.1 263.1 l-0.0 2.7" stroke="#3a4a60" stroke-width="0.61" opacity="0.36"/><path d="M155.3 246.5 l-0.3 5.5" stroke="#2f4f80" stroke-width="0.51" opacity="0.17"/><path d="M159.5 218.1 l0.2 8.3" stroke="#2f4f80" stroke-width="0.51" opacity="0.18"/><path d="M145.5 170.4 l0.5 2.6" stroke="#2f4f80" stroke-width="0.97" opacity="0.27"/><path d="M96.0 254.4 l-0.1 5.0" stroke="#2f4f80" stroke-width="0.41" opacity="0.33"/><path d="M138.5 258.9 l0.6 4.8" stroke="#2f4f80" stroke-width="0.50" opacity="0.28"/><path d="M94.4 258.1 l-1.1 8.1" stroke="#2f4f80" stroke-width="0.96" opacity="0.29"/><path d="M68.9 212.6 l-0.5 3.8" stroke="#5a4a50" stroke-width="0.85" opacity="0.34"/><path d="M148.9 248.3 l0.2 4.6" stroke="#2f4f80" stroke-width="0.51" opacity="0.20"/><path d="M158.7 234.3 l0.2 2.1" stroke="#2f4f80" stroke-width="0.78" opacity="0.31"/><path d="M113.2 243.4 l0.2 3.5" stroke="#5a4a50" stroke-width="0.51" opacity="0.17"/><path d="M85.9 172.0 l1.8 8.7" stroke="#3a4a60" stroke-width="0.77" opacity="0.33"/><path d="M70.1 230.0 l1.3 6.4" stroke="#3a4a60" stroke-width="0.56" opacity="0.22"/><path d="M66.4 196.2 l-1.0 5.9" stroke="#2f4f80" stroke-width="0.78" opacity="0.35"/><path d="M66.5 197.1 l-0.7 4.7" stroke="#5a4a50" stroke-width="0.63" opacity="0.39"/><path d="M74.2 201.4 l0.5 5.4" stroke="#3a4a60" stroke-width="0.64" opacity="0.23"/><path d="M64.7 218.1 l-0.5 6.6" stroke="#2f4f80" stroke-width="0.42" opacity="0.34"/><path d="M84.5 178.1 l0.2 2.4" stroke="#3a4a60" stroke-width="0.64" opacity="0.30"/><path d="M149.3 229.0 l-0.9 5.3" stroke="#5a4a50" stroke-width="0.55" opacity="0.28"/><path d="M134.0 233.5 l1.3 6.8" stroke="#2f4f80" stroke-width="0.65" opacity="0.18"/><path d="M90.4 248.5 l0.1 3.0" stroke="#5a4a50" stroke-width="0.76" opacity="0.31"/><path d="M83.8 253.1 l0.3 2.9" stroke="#3a4a60" stroke-width="0.48" opacity="0.27"/><path d="M126.8 171.2 l-0.2 3.9" stroke="#3a4a60" stroke-width="0.74" opacity="0.30"/><path d="M118.4 169.9 l-1.3 8.8" stroke="#2f4f80" stroke-width="0.93" opacity="0.16"/><path d="M154.4 216.9 l0.3 2.2" stroke="#2f4f80" stroke-width="0.57" opacity="0.34"/><path d="M75.8 199.4 l0.7 5.3" stroke="#2f4f80" stroke-width="0.61" opacity="0.34"/><path d="M134.1 163.1 l-0.7 7.8" stroke="#5a4a50" stroke-width="0.67" opacity="0.34"/><path d="M135.4 166.0 l0.8 8.9" stroke="#2f4f80" stroke-width="0.73" opacity="0.34"/><path d="M83.0 228.6 l1.4 8.0" stroke="#5a4a50" stroke-width="0.45" opacity="0.29"/><path d="M138.0 167.5 l0.2 2.1" stroke="#3a4a60" stroke-width="0.95" opacity="0.30"/><path d="M86.5 212.7 l1.0 8.1" stroke="#2f4f80" stroke-width="0.79" opacity="0.23"/><path d="M96.5 254.6 l-0.5 8.3" stroke="#3a4a60" stroke-width="0.57" opacity="0.28"/><path d="M65.6 226.2 l0.1 7.1" stroke="#2f4f80" stroke-width="0.45" opacity="0.36"/><path d="M88.7 247.5 l-0.0 3.4" stroke="#2f4f80" stroke-width="0.88" opacity="0.29"/><path d="M140.1 259.4 l0.8 3.9" stroke="#3a4a60" stroke-width="0.71" opacity="0.29"/><path d="M167.6 203.9 l-0.0 2.4" stroke="#2f4f80" stroke-width="0.87" opacity="0.17"/><path d="M111.2 257.0 l-0.1 2.2" stroke="#5a4a50" stroke-width="0.46" opacity="0.35"/><path d="M118.9 263.5 l-0.5 5.6" stroke="#3a4a60" stroke-width="0.64" opacity="0.23"/></g>
    <g clip-path="url(#c3)"><path d="M323.1 144.4 l0.2 4.9" stroke="#2f4f80" stroke-width="0.86" opacity="0.25"/><path d="M337.1 175.5 l-0.1 5.2" stroke="#2f4f80" stroke-width="0.84" opacity="0.39"/><path d="M329.9 161.6 l0.9 5.1" stroke="#2f4f80" stroke-width="0.61" opacity="0.19"/><path d="M323.7 126.7 l0.7 2.6" stroke="#2f4f80" stroke-width="0.61" opacity="0.22"/><path d="M308.9 124.4 l0.2 2.5" stroke="#2f4f80" stroke-width="0.79" opacity="0.19"/><path d="M318.0 142.8 l1.8 5.3" stroke="#2f4f80" stroke-width="0.45" opacity="0.20"/><path d="M296.0 153.4 l1.1 4.2" stroke="#2f4f80" stroke-width="0.49" opacity="0.22"/><path d="M347.0 128.9 l-0.0 4.2" stroke="#2f4f80" stroke-width="0.64" opacity="0.22"/><path d="M321.4 122.9 l-0.3 4.2" stroke="#2f4f80" stroke-width="0.64" opacity="0.21"/><path d="M368.7 128.7 l0.4 3.5" stroke="#2f4f80" stroke-width="0.66" opacity="0.22"/><path d="M314.2 114.6 l0.3 2.0" stroke="#2f4f80" stroke-width="0.59" opacity="0.35"/><path d="M310.5 106.4 l0.5 2.6" stroke="#2f4f80" stroke-width="0.53" opacity="0.37"/><path d="M341.8 190.9 l0.4 3.0" stroke="#2f4f80" stroke-width="0.48" opacity="0.34"/><path d="M356.1 133.0 l1.6 5.0" stroke="#2f4f80" stroke-width="0.53" opacity="0.33"/><path d="M319.6 140.4 l0.5 5.8" stroke="#2f4f80" stroke-width="0.83" opacity="0.23"/><path d="M336.1 184.5 l-0.0 2.4" stroke="#2f4f80" stroke-width="0.50" opacity="0.29"/><path d="M329.6 176.7 l0.7 3.2" stroke="#2f4f80" stroke-width="0.44" opacity="0.23"/><path d="M343.0 130.8 l1.4 4.5" stroke="#2f4f80" stroke-width="0.60" opacity="0.27"/><path d="M331.8 156.0 l0.4 2.0" stroke="#2f4f80" stroke-width="0.76" opacity="0.21"/><path d="M303.2 90.5 l0.0 6.0" stroke="#2f4f80" stroke-width="0.50" opacity="0.30"/><path d="M309.4 146.5 l0.6 3.1" stroke="#2f4f80" stroke-width="0.60" opacity="0.32"/><path d="M292.5 155.5 l-0.2 3.3" stroke="#2f4f80" stroke-width="0.68" opacity="0.33"/><path d="M353.0 124.3 l0.8 2.4" stroke="#2f4f80" stroke-width="0.74" opacity="0.33"/><path d="M313.5 148.9 l1.3 4.2" stroke="#2f4f80" stroke-width="0.51" opacity="0.19"/><path d="M310.3 138.0 l0.9 5.6" stroke="#2f4f80" stroke-width="0.66" opacity="0.31"/><path d="M321.8 128.2 l0.6 3.3" stroke="#2f4f80" stroke-width="0.41" opacity="0.25"/><path d="M338.8 167.8 l0.4 4.6" stroke="#2f4f80" stroke-width="0.41" opacity="0.23"/><path d="M335.2 130.5 l0.4 3.5" stroke="#2f4f80" stroke-width="0.79" opacity="0.36"/><path d="M327.1 168.9 l0.6 5.6" stroke="#2f4f80" stroke-width="0.58" opacity="0.28"/><path d="M345.8 139.5 l0.2 4.1" stroke="#2f4f80" stroke-width="0.82" opacity="0.20"/><path d="M312.3 110.6 l0.6 2.3" stroke="#2f4f80" stroke-width="0.69" opacity="0.32"/><path d="M364.7 123.4 l1.1 3.7" stroke="#2f4f80" stroke-width="0.89" opacity="0.18"/><path d="M324.6 146.8 l1.0 4.1" stroke="#2f4f80" stroke-width="0.85" opacity="0.40"/><path d="M309.2 101.6 l1.2 5.2" stroke="#2f4f80" stroke-width="0.85" opacity="0.21"/><path d="M314.5 107.4 l1.3 4.0" stroke="#2f4f80" stroke-width="0.42" opacity="0.20"/><path d="M333.4 155.4 l0.2 3.2" stroke="#2f4f80" stroke-width="0.77" opacity="0.25"/><path d="M307.9 91.1 l0.4 2.8" stroke="#2f4f80" stroke-width="0.47" opacity="0.25"/><path d="M318.2 145.0 l0.3 3.0" stroke="#2f4f80" stroke-width="0.57" opacity="0.31"/><path d="M337.5 129.1 l0.5 5.8" stroke="#2f4f80" stroke-width="0.63" opacity="0.25"/><path d="M333.8 165.8 l0.7 5.0" stroke="#2f4f80" stroke-width="0.90" opacity="0.36"/></g>
    <rect x="0.3" y="0.3" width="403.7" height="270.6" fill="none" stroke="#9c9c9c" stroke-width="0.6"/>
  </svg>
</div>

<!-- bottom of canvas -->
<div class="a" style="left:0;top:427px;width:486px;height:5px;background:#171717"></div>
<div class="a" style="left:473.5px;top:425px;width:12.6px;height:6.3px;background:#1e1e1e"></div>
<div class="a" style="left:0;top:431.8px;width:486px;height:0.9px;background:#3a3a3a"></div>
<div class="a" style="left:0;top:432.7px;width:486px;height:24.3px;background:#282828"></div>
<!-- gray strip -->
<div class="a" style="left:0;top:365.3px;width:9px;height:91.7px;background:#a0a0a0"></div>

<!-- separator column -->
<div class="a" style="left:486px;top:66.5px;width:5.6px;height:390.5px;background:#141414"></div>

<!-- ===== RIGHT PANEL ===== -->
<div class="a" style="left:491.6px;top:66.5px;width:268.4px;height:390.5px;background:#1c1c1c"></div>
<!-- tabs -->
<div class="a" style="left:528.7px;top:66.7px;width:76.6px;height:12.7px;background:#171717"></div>
<div class="a" style="left:605.3px;top:66.7px;width:77.7px;height:12.7px;background:#262626"></div>
<div class="a" style="left:683px;top:66.7px;width:77px;height:12.7px;background:#181818"></div>
<div class="t c" style="left:528.7px;width:76.6px;top:69.8px;font-size:5.6px;color:#b8b8b8">Observation Settings</div>
<div class="t c b" style="left:605.3px;width:77.7px;top:69.8px;font-size:5.3px;color:#f4f4f4">Image Settings</div>
<div class="t c" style="left:683px;width:77px;top:69.8px;font-size:5.6px;color:#a8a8a8">Device Status</div>
<!-- panel -->
<div class="a" style="left:528.7px;top:79.4px;width:231.3px;height:352.2px;background:#262626"></div>

<svg style="left:492.0px;top:0" width="35.0" height="430">
<path d="M0 68.6 Q0 66.6 2 66.6 H33.0 Q35.0 66.6 35.0 68.6 V105.4 L17.5 114.4 L0 105.4 Z" fill="#3a72c4"/>
<path d="M0 106.70 L17.5 115.70 L35.0 106.70 V151.80 L17.5 159.80 L0 151.80 Z" fill="#252525"/>
<path d="M0 153.10 L17.5 161.10 L35.0 153.10 V196.20 L17.5 204.20 L0 196.20 Z" fill="#252525"/>
<path d="M0.5 153.50 L17.5 161.50 L34.5 153.50" stroke="#313131" stroke-width="0.7" fill="none"/>
<path d="M0 197.50 L17.5 205.50 L35.0 197.50 V240.60 L17.5 248.60 L0 240.60 Z" fill="#252525"/>
<path d="M0.5 197.90 L17.5 205.90 L34.5 197.90" stroke="#313131" stroke-width="0.7" fill="none"/>
<path d="M0 241.90 L17.5 249.90 L35.0 241.90 V285.00 L17.5 293.00 L0 285.00 Z" fill="#252525"/>
<path d="M0.5 242.30 L17.5 250.30 L34.5 242.30" stroke="#313131" stroke-width="0.7" fill="none"/>
<path d="M0 286.30 L17.5 294.30 L35.0 286.30 V329.40 L17.5 337.40 L0 329.40 Z" fill="#252525"/>
<path d="M0.5 286.70 L17.5 294.70 L34.5 286.70" stroke="#313131" stroke-width="0.7" fill="none"/>
<path d="M0 330.70 L17.5 338.70 L35.0 330.70 V373.80 L17.5 381.80 L0 373.80 Z" fill="#252525"/>
<path d="M0.5 331.10 L17.5 339.10 L34.5 331.10" stroke="#313131" stroke-width="0.7" fill="none"/>
<path d="M0 375.10 L17.5 383.10 L35.0 375.10 V422.00 Q35.0 423.5 33.5 423.5 H1.5 Q0 423.5 0 422.0 Z" fill="#252525"/>
<path d="M0.5 375.50 L17.5 383.50 L34.5 375.50" stroke="#313131" stroke-width="0.7" fill="none"/>
</svg>
<div class="t c" style="left:492px;width:35px;top:94.6px;font-size:4.8px;color:#f4f4f4">Observation</div>
<div class="t c" style="left:492px;width:35px;top:137.7px;font-size:4.6px;color:#e0e0e0">Acquisition</div>
<div class="t c" style="left:492px;width:35px;top:181.9px;font-size:4.6px;color:#e0e0e0">Processing</div>
<div class="t c" style="left:492px;width:35px;top:227.3px;font-size:4.6px;color:#e0e0e0">Annotations</div>
<div class="t c" style="left:492px;width:35px;top:268.7px;font-size:4.6px;color:#e0e0e0">2D</div>
<div class="t c" style="left:492px;width:35px;top:274.5px;font-size:4.6px;color:#e0e0e0">Measurement</div>
<div class="t c" style="left:492px;width:35px;top:312.7px;font-size:4.6px;color:#e0e0e0">3D</div>
<div class="t c" style="left:492px;width:35px;top:318.9px;font-size:4.6px;color:#e0e0e0">Measurement</div>
<div class="t c" style="left:492px;width:35px;top:357.1px;font-size:4.6px;color:#e0e0e0">Materials</div>
<div class="t c" style="left:492px;width:35px;top:363.6px;font-size:4.6px;color:#e0e0e0">Solutions</div>
<div class="t c" style="left:492px;width:35px;top:404.3px;font-size:4.6px;color:#e0e0e0">Report</div>
<svg style="left:503px;top:80.4px" width="13.3" height="12.7" viewBox="0 0 26 25"><path d="M2 2 L7 0.5 L9 4 L12 3.5 Q22 2 23.5 10 L24.5 18 H16 Q17 12 13 10 L11 11 L9 9 L5 10 Z" fill="#f2f2f2"/><rect x="1" y="18" width="24" height="6.5" fill="#f2f2f2"/><rect x="1" y="14" width="9" height="3" fill="#f2f2f2"/><circle cx="16.5" cy="16" r="3" fill="none" stroke="#3a72c4" stroke-width="1.4"/><path d="M4 20.5 H14" stroke="#3a72c4" stroke-width="1.2"/></svg>
<svg style="left:503px;top:124px" width="13.5" height="11.5" viewBox="0 0 27 23"><path d="M1.5 13 V1.5 H15 V5" stroke="#f2f2f2" stroke-width="1.8" fill="none"/><path d="M6 9 H10 L12 6.5 H18 L20 9 H25 V22 H6 Z" fill="#f2f2f2"/><circle cx="15.5" cy="15.5" r="3.6" fill="#262626"/></svg>
<svg style="left:503px;top:167.3px" width="13" height="12" viewBox="0 0 26 24"><rect x="0" y="0" width="26" height="24" fill="#f2f2f2"/><path d="M13 0 V24" stroke="#262626" stroke-width="1.2"/><circle cx="6" cy="6" r="2.5" fill="#222"/><circle cx="20" cy="6" r="2.5" fill="#222"/><circle cx="6" cy="18" r="2.5" fill="#222"/><circle cx="20" cy="18" r="2.5" fill="#222"/><ellipse cx="13" cy="12" rx="4" ry="2.4" fill="#222"/></svg>
<svg style="left:502.5px;top:212.3px" width="14" height="12" viewBox="0 0 28 24"><path d="M3 21 L4 16 L16 2 Q18 0.5 19.5 2 Q21 3.5 19.5 5.5 L7.5 19.5 Z" fill="#f2f2f2"/></svg>
<div class="t b" style="left:508px;top:216.2px;font-size:4.2px;color:#f2f2f2">ABC</div>
<svg style="left:503.5px;top:253.2px" width="13" height="14" viewBox="0 0 26 28"><rect x="5" y="4" width="17" height="15" fill="#f2f2f2"/><path d="M2.5 2 V23 M2.5 24 L23 26.5" stroke="#f2f2f2" stroke-width="1.4"/><circle cx="2.5" cy="2.5" r="2" fill="#f2f2f2"/><circle cx="2.5" cy="23.5" r="2" fill="#f2f2f2"/><circle cx="23.5" cy="26" r="2" fill="#f2f2f2"/></svg>
<svg style="left:503.5px;top:297px" width="13" height="13.6" viewBox="0 0 26 27"><ellipse cx="15" cy="7" rx="8" ry="3" fill="#f2f2f2"/><ellipse cx="15" cy="12.5" rx="9" ry="3.2" fill="#f2f2f2"/><ellipse cx="15" cy="18" rx="8" ry="3" fill="#f2f2f2"/><path d="M3 1 V26 M3 26 H8" stroke="#f2f2f2" stroke-width="1.4"/><circle cx="3" cy="2" r="1.8" fill="#f2f2f2"/><circle cx="3" cy="13" r="1.8" fill="#f2f2f2"/></svg>
<svg style="left:502.8px;top:345px" width="14" height="10.5" viewBox="0 0 28 21"><rect x="1" y="1" width="14" height="15" rx="2" fill="#f2f2f2"/><circle cx="6" cy="6" r="2" fill="#262626"/><circle cx="10" cy="11" r="2.2" fill="#262626"/><rect x="15" y="12" width="3" height="8" fill="#f2f2f2"/><rect x="19.5" y="8" width="3" height="12" fill="#f2f2f2"/><rect x="24" y="4" width="3" height="16" fill="#f2f2f2"/><path d="M12 20 H28" stroke="#f2f2f2" stroke-width="1.2"/></svg>
<svg style="left:505px;top:389px" width="9" height="11" viewBox="0 0 18 22"><path d="M1 1 H12 L17 6 V21 H1 Z" stroke="#f2f2f2" stroke-width="1.6" fill="none"/><path d="M4 9 H14 M4 12.5 H14 M4 16 H14" stroke="#f2f2f2" stroke-width="1.5"/></svg>
<svg style="left:487.6px;top:245.8px" width="3" height="5"><path d="M0.5 0.5 L2.3 2.5 L0.5 4.5" stroke="#ccc" stroke-width="0.8" fill="none"/></svg>
<svg style="left:531.8px;top:86.8px" width="6.4" height="3.6"><path d="M0.5 0.5 L3.2 3.1 L5.9 0.5" stroke="#e8e8e8" stroke-width="0.95" fill="none"/></svg>
<div class="t" style="left:539.8px;top:84.2px;font-size:5.5px;color:#e8e8e8;-webkit-text-stroke:0.04px #e8e8e8"><b style="font-size:5.2px;color:#f2f2f2">Exposure Adjustment:</b> Automatic 6.851 ms</div>
<svg style="left:749.2px;top:85.2px" width="7.2" height="7.2" viewBox="0 0 24 24"><path fill="#e8e8e8" d="M10.5 1h3l.5 3.1a8 8 0 0 1 2.3 1l2.6-1.8 2.1 2.1-1.8 2.6a8 8 0 0 1 1 2.3L23 10.5v3l-3.1.5a8 8 0 0 1-1 2.3l1.8 2.6-2.1 2.1-2.6-1.8a8 8 0 0 1-2.3 1L13.5 23h-3l-.5-3.1a8 8 0 0 1-2.3-1l-2.6 1.8-2.1-2.1 1.8-2.6a8 8 0 0 1-1-2.3L1 13.5v-3l3.1-.5a8 8 0 0 1 1-2.3L3.3 5.1l2.1-2.1 2.6 1.8a8 8 0 0 1 2.3-1z"/><circle cx="12" cy="12" r="4.8" fill="#262626"/></svg>
<div class="t" style="left:537.8px;top:100.1px;font-size:4.7px;color:#cdcdcd">Exposure mode:</div>
<div class="a" style="left:597.2px;top:96.3px;width:72.7px;height:13.2px;background:#45474d;border-radius:2px;"></div>
<div class="a" style="left:597.2px;top:96.3px;width:36.3px;height:13.2px;background:#3a72c4;border-radius:0px;border-radius:2px 0 0 2px"></div>
<div class="t" style="left:597.2px;top:100.8px;font-size:4.7px;color:#fff;width:36.3px;text-align:center">Automatic</div>
<div class="t" style="left:633.5px;top:100.8px;font-size:4.7px;color:#d8d8d8;width:36.4px;text-align:center">Manual</div>
<div class="t" style="left:537.8px;top:117.2px;font-size:4.7px;color:#cdcdcd">Exposure time:</div>
<div class="a" style="left:597.2px;top:113.6px;width:36.3px;height:13.4px;background:#2e2e2e;border-radius:2px;"></div>
<div class="t" style="left:597.2px;top:117.7px;font-size:4.7px;color:#d0d0d0;width:34.0px;text-align:right">6.851 ms</div>
<div class="a" style="left:637px;top:119.8px;width:4.2px;height:0.9px;background:#5a5a5a"></div>
<div class="a" style="left:644.5px;top:119.9px;width:53px;height:0.8px;background:#383838"></div>
<div class="a" style="left:661.8px;top:116.5px;width:7.6px;height:7.6px;border-radius:50%;background:#434343"></div>
<div class="a" style="left:701.5px;top:119.8px;width:4.2px;height:0.9px;background:#5a5a5a"></div>
<div class="a" style="left:703.15px;top:118.2px;width:0.9px;height:4.2px;background:#5a5a5a"></div>
<div class="a" style="left:713.3px;top:113.5px;width:17.6px;height:13.1px;background:#45474d;border-radius:2px;"></div>
<svg style="left:717.5px;top:114.5px" width="10" height="11" viewBox="0 0 20 22"><circle cx="8" cy="10.5" r="5.5" stroke="#eee" stroke-width="1.6" fill="none"/><path d="M6 3 H10 M8 3 V5 M8 10.5 L10 8" stroke="#eee" stroke-width="1.5"/><rect x="12" y="14" width="6" height="5" fill="#eee"/><path d="M13 14 V12.5 Q15 10.5 17 12.5 V14" stroke="#eee" stroke-width="1.1" fill="none"/></svg>
<div class="t" style="left:537.8px;top:134.5px;font-size:4.7px;color:#cdcdcd">Target value:</div>
<div class="a" style="left:597.2px;top:130.9px;width:36.3px;height:13.9px;background:#3f4045;border-radius:2px;"></div>
<div class="t" style="left:597.2px;top:135.1px;font-size:4.7px;color:#f4f4f4;width:34.0px;text-align:right">150</div>
<div class="a" style="left:637px;top:137.6px;width:4.2px;height:0.9px;background:#f0f0f0"></div>
<div class="a" style="left:644.5px;top:137.6px;width:53px;height:0.8px;background:#5a5a5a"></div>
<div class="a" style="left:671.5px;top:134.2px;width:7.6px;height:7.6px;border-radius:50%;background:#9b9da4"></div>
<div class="a" style="left:701.5px;top:137.6px;width:4.2px;height:0.9px;background:#f0f0f0"></div>
<div class="a" style="left:703.15px;top:135.9px;width:0.9px;height:4.2px;background:#f0f0f0"></div>
<svg style="left:749.7px;top:149.3px" width="7" height="2"><path d="M0.8 1 h1 M3 1 h1 M5.2 1 h1" stroke="#aaa" stroke-width="1"/></svg>
<svg style="left:531.8px;top:163.6px" width="6.4" height="3.6"><path d="M0.5 0.5 L3.2 3.1 L5.9 0.5" stroke="#e8e8e8" stroke-width="0.95" fill="none"/></svg>
<div class="t" style="left:539.8px;top:161.0px;font-size:5.5px;color:#e8e8e8;-webkit-text-stroke:0.04px #e8e8e8"><b style="font-size:5.2px;color:#f2f2f2">Image Enhancement:</b> Off</div>
<div class="t" style="left:537.8px;top:175.8px;font-size:4.7px;color:#cdcdcd">Enhancement:</div>
<div class="a" style="left:597.5px;top:172.0px;width:108.8px;height:13.5px;background:#45474d;border-radius:2px;"></div>
<div class="a" style="left:597.5px;top:172.0px;width:36.0px;height:13.5px;background:#3a72c4;border-radius:0px;border-radius:2px 0 0 2px"></div>
<div class="a" style="left:633.3px;top:172.0px;width:0.5px;height:13.5px;background:#3a3c41;border-radius:0px;"></div>
<div class="a" style="left:670.3px;top:172.0px;width:0.5px;height:13.5px;background:#3a3c41;border-radius:0px;"></div>
<div class="t" style="left:597.5px;top:176.2px;font-size:4.7px;color:#fff;width:36.0px;text-align:center">Off</div>
<svg style="left:639px;top:174.5px" width="8" height="9" viewBox="0 0 16 18"><path d="M8 1 V17 M3 4 L5 6 M13 4 L11 6 M1 9 H4 M12 9 H15 M3 14 L5 12 M13 14 L11 12" stroke="#eee" stroke-width="1.4"/><path d="M8 5 A4 4 0 0 0 8 13 Z" fill="#eee"/><path d="M8 5 A4 4 0 0 1 8 13" stroke="#eee" stroke-width="1.2" fill="none"/></svg>
<div class="t" style="left:648.5px;top:176.2px;font-size:4.7px;color:#e4e4e4">LiveHDR</div>
<svg style="left:676px;top:175px" width="8" height="8" viewBox="0 0 16 16"><rect x="1" y="2" width="3" height="3" fill="#eee"/><rect x="1" y="7" width="3" height="3" fill="#eee"/><rect x="1" y="12" width="3" height="3" fill="#eee"/><rect x="7" y="4.5" width="3" height="3" fill="#eee"/><rect x="7" y="9.5" width="3" height="3" fill="#eee"/><rect x="12" y="7" width="3" height="3" fill="#eee"/><path d="M4 3.5 L7 6 M4 8.5 L7 6 M4 8.5 L7 11 M4 13.5 L7 11 M10 6 L12 8.5 M10 11 L12 8.5" stroke="#eee" stroke-width="0.8"/></svg>
<div class="t" style="left:686.0px;top:176.2px;font-size:4.7px;color:#e4e4e4">Live AI</div>
<svg style="left:531.8px;top:196.6px" width="6.4" height="3.6"><path d="M0.5 0.5 L3.2 3.1 L5.9 0.5" stroke="#e8e8e8" stroke-width="0.95" fill="none"/></svg>
<div class="t" style="left:539.8px;top:194.0px;font-size:5.5px;color:#e8e8e8;-webkit-text-stroke:0.04px #e8e8e8"><b style="font-size:5.2px;color:#f2f2f2">Image Averaging</b> </div>
<div class="a" style="left:538.0px;top:208.2px;width:7.6px;height:8.0px;background:#3c3c3c;border-radius:1px;"></div>
<div class="t" style="left:548.3px;top:208.4px;font-size:4.7px;color:#d0d0d0">Use for live image:</div>
<div class="a" style="left:597.5px;top:205.6px;width:36.0px;height:13.2px;background:#2b2b2b;border-radius:2px;"></div>
<div class="t" style="left:597.5px;top:209.1px;font-size:4.7px;color:#595959;width:34.0px;text-align:right">2 frames</div>
<div class="a" style="left:637px;top:211.8px;width:4.2px;height:0.9px;background:#5a5a5a"></div>
<div class="a" style="left:644.5px;top:211.8px;width:53px;height:0.8px;background:#383838"></div>
<div class="a" style="left:644.2px;top:208.4px;width:7.6px;height:7.6px;border-radius:50%;background:#434343"></div>
<div class="a" style="left:701.5px;top:211.8px;width:4.2px;height:0.9px;background:#5a5a5a"></div>
<div class="a" style="left:703.15px;top:210.1px;width:0.9px;height:4.2px;background:#5a5a5a"></div>
<div class="a" style="left:538.0px;top:226.2px;width:7.6px;height:8.0px;background:#3c3c3c;border-radius:1px;"></div>
<div class="t" style="left:548.3px;top:226.4px;font-size:4.7px;color:#d0d0d0">Use for snapshot:</div>
<div class="a" style="left:597.5px;top:223.6px;width:36.0px;height:13.2px;background:#2b2b2b;border-radius:2px;"></div>
<div class="t" style="left:597.5px;top:227.1px;font-size:4.7px;color:#595959;width:34.0px;text-align:right">2 frames</div>
<div class="a" style="left:637px;top:229.8px;width:4.2px;height:0.9px;background:#5a5a5a"></div>
<div class="a" style="left:644.5px;top:229.8px;width:53px;height:0.8px;background:#383838"></div>
<div class="a" style="left:644.2px;top:226.4px;width:7.6px;height:7.6px;border-radius:50%;background:#434343"></div>
<div class="a" style="left:701.5px;top:229.8px;width:4.2px;height:0.9px;background:#5a5a5a"></div>
<div class="a" style="left:703.15px;top:228.1px;width:0.9px;height:4.2px;background:#5a5a5a"></div>
<svg style="left:531.8px;top:247.8px" width="6.4" height="3.6"><path d="M0.5 0.5 L3.2 3.1 L5.9 0.5" stroke="#e8e8e8" stroke-width="0.95" fill="none"/></svg>
<div class="t" style="left:539.8px;top:245.2px;font-size:5.5px;color:#e8e8e8;-webkit-text-stroke:0.04px #e8e8e8"><b style="font-size:5.2px;color:#f2f2f2">Color Adjustment:</b> RGB</div>
<svg style="left:749.2px;top:246.2px" width="7.2" height="7.2" viewBox="0 0 24 24"><path fill="#e8e8e8" d="M10.5 1h3l.5 3.1a8 8 0 0 1 2.3 1l2.6-1.8 2.1 2.1-1.8 2.6a8 8 0 0 1 1 2.3L23 10.5v3l-3.1.5a8 8 0 0 1-1 2.3l1.8 2.6-2.1 2.1-2.6-1.8a8 8 0 0 1-2.3 1L13.5 23h-3l-.5-3.1a8 8 0 0 1-2.3-1l-2.6 1.8-2.1-2.1 1.8-2.6a8 8 0 0 1-1-2.3L1 13.5v-3l3.1-.5a8 8 0 0 1 1-2.3L3.3 5.1l2.1-2.1 2.6 1.8a8 8 0 0 1 2.3-1z"/><circle cx="12" cy="12" r="4.8" fill="#262626"/></svg>
<div class="t" style="left:537.8px;top:260.8px;font-size:4.7px;color:#cdcdcd">Color mode:</div>
<div class="a" style="left:597.5px;top:257.0px;width:36.0px;height:13.3px;background:#45474d;border-radius:2px;"></div>
<div class="a" style="left:597.5px;top:257.0px;width:17.9px;height:13.3px;background:#3a72c4;border-radius:0px;border-radius:2px 0 0 2px"></div>
<svg style="left:601.2px;top:261px" width="11" height="5.5"><rect x="0.4" y="0.4" width="10.2" height="4.7" rx="1.2" fill="#f4f4f4"/><circle cx="3.1" cy="2.75" r="1.25" fill="#e03030"/><circle cx="5.5" cy="2.75" r="1.25" fill="#30b040"/><circle cx="7.9" cy="2.75" r="1.25" fill="#3050e0"/></svg>
<svg style="left:619px;top:261px" width="11" height="5.5"><rect x="0.4" y="0.4" width="10.2" height="4.7" rx="1.2" fill="#f4f4f4"/><rect x="1.6" y="1.5" width="4" height="2.5" fill="#222"/></svg>
<div class="t" style="left:537.8px;top:278.2px;font-size:4.7px;color:#cdcdcd">White balance:</div>
<div class="a" style="left:597.5px;top:274.4px;width:17.8px;height:13.3px;background:#2d2d2d;border-radius:2px"></div>
<svg style="left:602.0px;top:276.9px" width="9" height="8" viewBox="0 0 18 16"><rect x="1.5" y="6" width="8" height="8.5" stroke="#8a8a8a" stroke-width="1.2" fill="none"/><path d="M5 11 L13 3 M11.5 2 L15.5 6 M14 1.5 L16.5 4" stroke="#8a8a8a" stroke-width="1.3"/></svg>
<div class="a" style="left:619.6px;top:274.4px;width:17.8px;height:13.3px;background:#2d2d2d;border-radius:2px"></div>
<svg style="left:624.1px;top:276.9px" width="9" height="8" viewBox="0 0 18 16"><rect x="1.5" y="6" width="8" height="8.5" stroke="#8a8a8a" stroke-width="1.2" fill="none"/><path d="M5 11 L13 3 M11.5 2 L15.5 6 M14 1.5 L16.5 4" stroke="#8a8a8a" stroke-width="1.3"/></svg>
<div class="t" style="left:537.8px;top:295.5px;font-size:4.7px;color:#cdcdcd">Black balance:</div>
<div class="a" style="left:597.5px;top:291.8px;width:17.8px;height:13.3px;background:#2d2d2d;border-radius:2px"></div>
<svg style="left:602.0px;top:294.3px" width="9" height="8" viewBox="0 0 18 16"><rect x="1.5" y="6" width="8" height="8.5" stroke="#8a8a8a" stroke-width="1.2" fill="none"/><path d="M5 11 L13 3 M11.5 2 L15.5 6 M14 1.5 L16.5 4" stroke="#8a8a8a" stroke-width="1.3"/></svg>
<svg style="left:749.7px;top:310.3px" width="7" height="2"><path d="M0.8 1 h1 M3 1 h1 M5.2 1 h1" stroke="#aaa" stroke-width="1"/></svg>
<svg style="left:531.8px;top:324.4px" width="6.4" height="3.6"><path d="M0.5 0.5 L3.2 3.1 L5.9 0.5" stroke="#e8e8e8" stroke-width="0.95" fill="none"/></svg>
<div class="t" style="left:539.8px;top:321.8px;font-size:5.5px;color:#e8e8e8;-webkit-text-stroke:0.04px #e8e8e8"><b style="font-size:5.2px;color:#f2f2f2">Resolution:</b> 4K, 16:9</div>
<svg style="left:749.2px;top:322.8px" width="7.2" height="7.2" viewBox="0 0 24 24"><path fill="#e8e8e8" d="M10.5 1h3l.5 3.1a8 8 0 0 1 2.3 1l2.6-1.8 2.1 2.1-1.8 2.6a8 8 0 0 1 1 2.3L23 10.5v3l-3.1.5a8 8 0 0 1-1 2.3l1.8 2.6-2.1 2.1-2.6-1.8a8 8 0 0 1-2.3 1L13.5 23h-3l-.5-3.1a8 8 0 0 1-2.3-1l-2.6 1.8-2.1-2.1 1.8-2.6a8 8 0 0 1-1-2.3L1 13.5v-3l3.1-.5a8 8 0 0 1 1-2.3L3.3 5.1l2.1-2.1 2.6 1.8a8 8 0 0 1 2.3-1z"/><circle cx="12" cy="12" r="4.8" fill="#262626"/></svg>
<div class="t" style="left:537.8px;top:337.2px;font-size:4.7px;color:#cdcdcd">Aspect ratio:</div>
<div class="a" style="left:597.5px;top:333.8px;width:108.8px;height:13.2px;background:#45474d;border-radius:2px;"></div>
<div class="a" style="left:634.3px;top:333.8px;width:36.2px;height:13.2px;background:#3a72c4;border-radius:0px;"></div>
<div class="a" style="left:670.3px;top:333.8px;width:0.5px;height:13.2px;background:#3a3c41;border-radius:0px;"></div>
<div class="t" style="left:597.5px;top:337.9px;font-size:4.7px;color:#dcdcdc;width:36.8px;text-align:center">Default</div>
<div class="t" style="left:634.3px;top:337.9px;font-size:4.7px;color:#fff;width:36.2px;text-align:center">16:9</div>
<div class="t" style="left:670.5px;top:337.9px;font-size:4.7px;color:#dcdcdc;width:35.8px;text-align:center">1:1 (Square)</div>
<div class="t" style="left:537.8px;top:354.6px;font-size:4.7px;color:#cdcdcd">Live:</div>
<div class="a" style="left:597.5px;top:351.3px;width:72.5px;height:13.3px;background:#45474d;border-radius:2px;"></div>
<div class="a" style="left:599.3px;top:354.0px;width:9.3px;height:8.2px;border:0.8px solid #eee;border-radius:0.8px"></div>
<div class="t b c" style="left:599.3px;width:9.3px;top:354.9px;font-size:4.8px;color:#fff">4K</div>
<div class="t" style="left:611.0px;top:355.3px;font-size:4.7px;color:#dcdcdc">4K</div>
<svg style="left:662.0px;top:356.6px" width="6.2" height="3.5"><path d="M0.5 0.5 L3.1 3.0 L5.7 0.5" stroke="#e8e8e8" stroke-width="1.0" fill="none"/></svg>
<div class="t" style="left:537.8px;top:371.8px;font-size:4.7px;color:#cdcdcd">Snapshot/Acquisition:</div>
<div class="a" style="left:597.5px;top:368.5px;width:72.5px;height:13.3px;background:#45474d;border-radius:2px;"></div>
<div class="a" style="left:599.3px;top:371.2px;width:9.3px;height:8.2px;border:0.8px solid #eee;border-radius:0.8px"></div>
<div class="t b c" style="left:599.3px;width:9.3px;top:372.1px;font-size:4.8px;color:#fff">4K</div>
<div class="t" style="left:611.0px;top:372.5px;font-size:4.7px;color:#dcdcdc">4K</div>
<svg style="left:662.0px;top:373.9px" width="6.2" height="3.5"><path d="M0.5 0.5 L3.1 3.0 L5.7 0.5" stroke="#e8e8e8" stroke-width="1.0" fill="none"/></svg>
<div class="a" style="left:674.3px;top:360.0px;width:18.0px;height:13.3px;background:#45474d;border-radius:2px;"></div>
<svg style="left:678.5px;top:364px" width="10" height="5"><rect x="0.6" y="0.8" width="4.8" height="3.4" rx="1.7" stroke="#eee" stroke-width="0.9" fill="none"/><rect x="4.2" y="0.8" width="4.8" height="3.4" rx="1.7" stroke="#eee" stroke-width="0.9" fill="none"/></svg>
<!-- bottom buttons -->
<div class="btn" style="left:491.4px;top:433.6px;width:85.8px;height:21.4px;border-radius:2px;background:#4a4d54"></div>
<div class="btn" style="left:581.6px;top:433.6px;width:86.3px;height:21.4px;border-radius:2px;background:#4a4d54"></div>
<div class="a" style="left:657.9px;top:433.6px;width:0.8px;height:21.4px;background:#3a3c41"></div>
<div class="btn" style="left:671.8px;top:433.6px;width:86.1px;height:21.4px;border-radius:2px;background:#4a4d54"></div>
<div class="a" style="left:748.2px;top:433.6px;width:0.8px;height:21.4px;background:#3a3c41"></div>

<!-- bottom bar content -->
<div class="a" style="left:221.5px;top:426.2px;width:35px;height:5.6px;background:#222"></div>
<svg style="left:236.8px;top:427.6px" width="4.5" height="2.6"><path d="M0.4 2.2 L2.25 0.5 L4.1 2.2" stroke="#bbb" stroke-width="0.7" fill="none"/></svg>
<svg style="left:478.3px;top:427.6px" width="3" height="2"><path d="M0 0 H2.8 L1.4 1.6 Z" fill="#eee"/></svg>
<div class="a" style="left:380.3px;top:436.4px;width:40.2px;height:15.8px;border:0.7px solid #333;border-radius:2px"></div>
<svg style="left:382.6px;top:440px" width="9.5" height="9.5" viewBox="0 0 19 19"><path d="M9.5 1 V18 M1 9.5 H18" stroke="#eee" stroke-width="2"/><path d="M6.5 4 L9.5 0.8 L12.5 4 Z M6.5 15 L9.5 18.2 L12.5 15 Z M4 6.5 L0.8 9.5 L4 12.5 Z M15 6.5 L18.2 9.5 L15 12.5 Z" fill="#eee"/></svg>
<div class="t" style="left:394.3px;top:437.6px;font-size:4.6px;color:#d8d8d8">X: 0</div>
<div class="t" style="left:394.3px;top:443.6px;font-size:4.6px;color:#d8d8d8">Y: 0</div>
<svg style="left:415.6px;top:448.3px" width="3" height="2"><path d="M0 0 H2.6 L1.3 1.5 Z" fill="#ddd"/></svg>
<div class="a" style="left:424.5px;top:436.4px;width:37.9px;height:15.8px;border:0.7px solid #333;border-radius:2px"></div>
<svg style="left:429.8px;top:439.8px" width="4" height="10" viewBox="0 0 8 20"><path d="M4 2 V18" stroke="#eee" stroke-width="1.6"/><path d="M1 5 L4 1 L7 5 Z M1 15 L4 19 L7 15 Z" fill="#eee"/></svg>
<div class="t" style="left:436px;top:441.2px;font-size:4.6px;color:#d8d8d8">Z: 0</div>
<svg style="left:458.2px;top:448.3px" width="3" height="2"><path d="M0 0 H2.6 L1.3 1.5 Z" fill="#ddd"/></svg>
<svg style="left:468.7px;top:440px" width="10.3" height="9.5" viewBox="0 0 21 19"><rect x="1" y="1" width="19" height="13" stroke="#eee" stroke-width="1.6" fill="none"/><path d="M10.5 4.5 V11 M10.5 14 V17 M6 18 H15" stroke="#eee" stroke-width="1.8"/></svg>
<!-- bottom button contents -->
<svg style="left:518.7px;top:440.8px" width="9.5" height="8" viewBox="0 0 19 16"><path d="M1 0.5 L18.5 8 L1 15.5 Z" fill="#f0f0f0"/></svg>
<div class="t" style="left:530.6px;top:441.6px;font-size:4.8px;color:#e2e2e2">Start Live</div>
<svg style="left:603.5px;top:440.5px" width="9.5" height="8" viewBox="0 0 19 16"><path d="M1 4 H5 L7 1 H12 L14 4 H18 V15 H1 Z" fill="#f4f4f4"/><circle cx="9.5" cy="9.5" r="3.2" fill="#4a4d54"/></svg>
<div class="t" style="left:614.8px;top:441.6px;font-size:4.8px;color:#e2e2e2">Snapshot</div>
<svg style="left:660.8px;top:443.2px" width="5.5" height="3.2"><path d="M0.4 0.4 L2.75 2.7 L5.1 0.4" stroke="#e0e0e0" stroke-width="0.9" fill="none"/></svg>
<svg style="left:695.5px;top:440px" width="9.5" height="9.5" viewBox="0 0 19 19"><path d="M1 1 H15 V8 M1 1 V18 H8 M3.5 1 V6 H12 V1" stroke="#f4f4f4" stroke-width="1.6" fill="none"/><path d="M9 17 L11 13 L17 7 L19 9 L13 15 Z" fill="#f4f4f4"/></svg>
<div class="t" style="left:707.5px;top:441.6px;font-size:4.8px;color:#e2e2e2">Save As</div>
<svg style="left:750.6px;top:443.2px" width="5.5" height="3.2"><path d="M0.4 0.4 L2.75 2.7 L5.1 0.4" stroke="#e0e0e0" stroke-width="0.9" fill="none"/></svg>
<!-- gray strip details -->
<div class="t" style="left:1.6px;top:375.8px;font-size:4.8px;color:#4a4a4a">mm</div><svg style="left:6.8px;top:375.5px" width="4" height="5"><path d="M0.5 4.5 L3.5 2.5 L1 0.5" stroke="#f0f0f0" stroke-width="0.8" fill="none"/></svg><svg style="left:6.5px;top:421.5px" width="4" height="5"><path d="M1 4.5 V1.5 L3 0.5 V4.5 Z" fill="#e8e8e8"/></svg>
<svg style="left:1.5px;top:423.5px" width="7" height="6"><path d="M1 5.5 H6 V2.5 Q6 1 4.5 1 H2.5 Q1 1 1 2.5 Z" fill="#6e6e6e"/></svg>

</body></html>
